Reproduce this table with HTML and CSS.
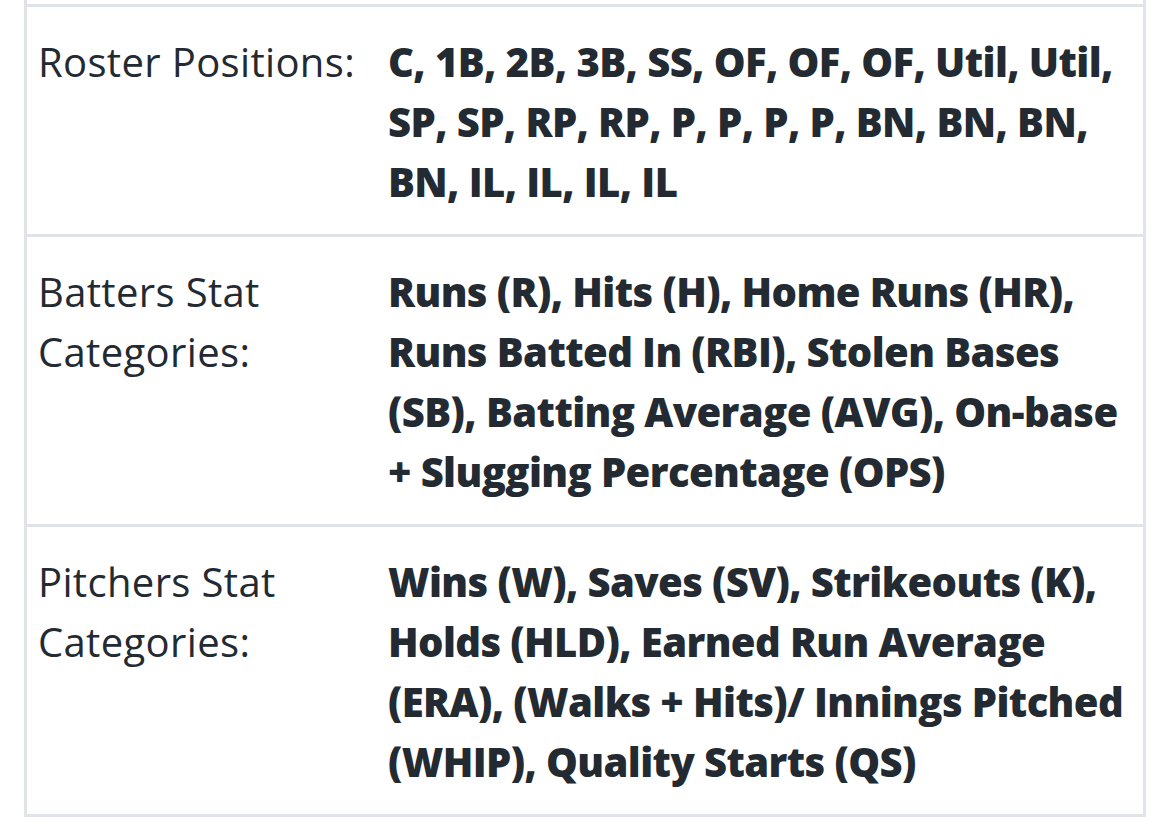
FILE: index.html
```html
<!DOCTYPE html>
<html lang="en">
<head>
<meta charset="utf-8">
<title>League Settings</title>
<link rel="stylesheet" href="styles.css">
</head>
<body>
<div class="settings">
  <div class="row">
    <div class="label">Roster Positions:</div>
    <div class="value">C, 1B, 2B, 3B, SS, OF, OF, OF, Util, Util, SP, SP, RP, RP, P, P, P, P, BN, BN, BN, BN, IL, IL, IL, IL</div>
  </div>
  <div class="row">
    <div class="label">Batters Stat Categories:</div>
    <div class="value">Runs (R), Hits (H), Home Runs (HR), Runs Batted In (RBI), Stolen Bases (SB), Batting Average (AVG), On-base + Slugging Percentage (OPS)</div>
  </div>
  <div class="row">
    <div class="label">Pitchers Stat Categories:</div>
    <div class="value">Wins (W), Saves (SV), Strikeouts (K), Holds (HLD), Earned Run Average (ERA), (Walks + Hits)/ Innings Pitched (WHIP), Quality Starts (QS)</div>
  </div>
</div>
</body>
</html>
```

FILE: styles.css
```css
html, body {
  margin: 0;
  padding: 0;
  background: #ffffff;
}

body {
  font-family: "Open Sans", "Noto Sans", sans-serif;
  color: #232a31;
  overflow: hidden;
}

.settings {
  margin: 0 24px;
  padding-top: 4px;
  border-left: 3px solid #e0e3e8;
  border-right: 3px solid #e0e3e8;
}

.row {
  display: grid;
  grid-template-columns: 350px 1fr;
  border-top: 3px solid #e0e3e8;
}

.row:last-child {
  border-bottom: 3px solid #e0e3e8;
}

.label,
.value {
  font-size: 40px;
  line-height: 60px;
  padding: 25px 12px 22px 11px;
}

.label {
  font-weight: 400;
  letter-spacing: 0.35px;
}

.value {
  font-weight: 800;
  letter-spacing: -0.6px;
}
```
